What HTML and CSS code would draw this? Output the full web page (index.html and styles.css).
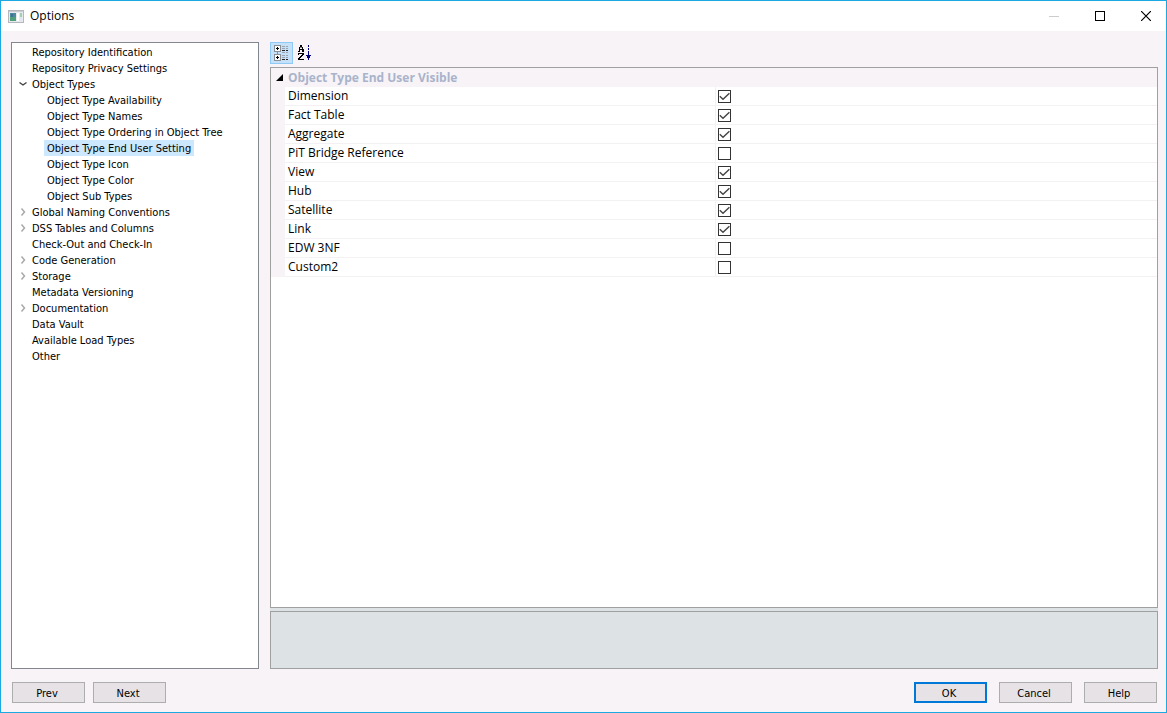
FILE: index.html
```html
<!DOCTYPE html>
<html lang="en">
<head>
    <meta charset="utf-8">
    <title>Options</title>
    <link rel="stylesheet" href="styles.css">
</head>
<body>
    <div class="window">
        <header class="titlebar">
            <svg class="app-icon" width="16" height="13" viewBox="0 0 16 13">
                <rect x="0.5" y="0.5" width="15" height="12" fill="#e8e9ec" stroke="#b4b7be"/>
                <rect x="1" y="1" width="14" height="1" fill="#c9ccd2"/>
                <rect x="2" y="3" width="6" height="8" fill="#4a8a9a"/>
                <rect x="2" y="7" width="6" height="4" fill="#4f9f7c"/>
                <rect x="3" y="4" width="2" height="3" fill="#3f6f9c"/>
                <rect x="9" y="3" width="2" height="8" fill="#fff"/>
                <rect x="12" y="3" width="2" height="4" fill="#9fd0b4"/>
                <rect x="12" y="7" width="2" height="4" fill="#dfe6ee"/>
            </svg>
            <h1>Options</h1>
            <div class="window-controls">
                <button type="button" aria-label="Minimize" disabled>
                    <svg width="10" height="10" viewBox="0 0 10 10"><rect y="5" width="10" height="1" fill="#ccc"/></svg>
                </button>
                <button type="button" aria-label="Maximize">
                    <svg width="10" height="10" viewBox="0 0 10 10"><rect x="0.5" y="0.5" width="9" height="9" fill="none" stroke="#000"/></svg>
                </button>
                <button type="button" aria-label="Close">
                    <svg width="10" height="10" viewBox="0 0 10 10"><path d="M0 0L10 10M10 0L0 10" stroke="#000" stroke-width="1.2"/></svg>
                </button>
            </div>
        </header>

        <main class="content">
            <nav class="tree" aria-label="Option categories">
                <ul>
                    <li><a href="#">Repository Identification</a></li>
                    <li><a href="#">Repository Privacy Settings</a></li>
                    <li>
                        <button type="button" class="toggle open" aria-label="Collapse Object Types"><svg width="8" height="8" viewBox="0 0 8 8"><path d="M0.5 2.5L4 5L7.5 2.5"/></svg></button><a href="#">Object Types</a>
                        <ul>
                            <li><a href="#">Object Type Availability</a></li>
                            <li><a href="#">Object Type Names</a></li>
                            <li><a href="#">Object Type Ordering in Object Tree</a></li>
                            <li><a href="#" class="selected">Object Type End User Setting</a></li>
                            <li><a href="#">Object Type Icon</a></li>
                            <li><a href="#">Object Type Color</a></li>
                            <li><a href="#">Object Sub Types</a></li>
                        </ul>
                    </li>
                    <li><button type="button" class="toggle" aria-label="Expand Global Naming Conventions"><svg width="8" height="8" viewBox="0 0 8 8"><path d="M2.5 0.5L5.5 4L2.5 7.5"/></svg></button><a href="#">Global Naming Conventions</a></li>
                    <li><button type="button" class="toggle" aria-label="Expand DSS Tables and Columns"><svg width="8" height="8" viewBox="0 0 8 8"><path d="M2.5 0.5L5.5 4L2.5 7.5"/></svg></button><a href="#">DSS Tables and Columns</a></li>
                    <li><a href="#">Check-Out and Check-In</a></li>
                    <li><button type="button" class="toggle" aria-label="Expand Code Generation"><svg width="8" height="8" viewBox="0 0 8 8"><path d="M2.5 0.5L5.5 4L2.5 7.5"/></svg></button><a href="#">Code Generation</a></li>
                    <li><button type="button" class="toggle" aria-label="Expand Storage"><svg width="8" height="8" viewBox="0 0 8 8"><path d="M2.5 0.5L5.5 4L2.5 7.5"/></svg></button><a href="#">Storage</a></li>
                    <li><a href="#">Metadata Versioning</a></li>
                    <li><button type="button" class="toggle" aria-label="Expand Documentation"><svg width="8" height="8" viewBox="0 0 8 8"><path d="M2.5 0.5L5.5 4L2.5 7.5"/></svg></button><a href="#">Documentation</a></li>
                    <li><a href="#">Data Vault</a></li>
                    <li><a href="#">Available Load Types</a></li>
                    <li><a href="#">Other</a></li>
                </ul>
            </nav>

            <section class="settings">
                <div class="toolbar">
                    <button type="button" class="active" aria-label="Categorized">
                        <svg width="15" height="16" viewBox="0 0 15 16">
                            <path d="M3.5 7V9" stroke="#8a8f96"/>
                            <rect x="0.5" y="0.5" width="6" height="6" fill="#fff" stroke="#8a8f96"/>
                            <rect x="0.5" y="9.5" width="6" height="6" fill="#fff" stroke="#8a8f96"/>
                            <path d="M2 3.5H5M3.5 2V5M2 12.5H5M3.5 11V14" stroke="#000"/>
                            <path d="M8 5.5H11M12 5.5H14M8 14.5H11M12 14.5H14" stroke="#222"/>
                            <path d="M8 1.5H11M12 1.5H14M8 3.5H11M12 3.5H14M8 7.5H11M12 7.5H14M8 10.5H11M12 10.5H14M8 12.5H11M12 12.5H14" stroke="#9aa3ad"/>
                        </svg>
                    </button>
                    <button type="button" aria-label="Alphabetical">
                        <svg width="14" height="16" viewBox="0 0 14 16">
                            <path d="M2 0H4V2H5V4H6V7H4V5H2V7H0V6H1V4H1V2H2ZM2 3V4H4V3L3 2Z" fill="#000" fill-rule="evenodd"/>
                            <path d="M0 8H6V10H5V11H4V12H3V13H2V14H6V15H0V13H1V12H2V11H3V10H4V9H1V10H0Z" fill="#000"/>
                            <path d="M10 0H11V2H10ZM10 3H11V5H10ZM10 6H11V10H13V11H12V12H12V13H11V15H10V13H9V12H9V11H8V10H10Z" fill="#000080"/>
                        </svg>
                    </button>
                </div>
                <div class="property-grid">
                    <table>
                        <colgroup>
                            <col class="col-margin">
                            <col>
                            <col class="col-value">
                        </colgroup>
                        <thead>
                            <tr>
                                <th class="margin"><svg width="7" height="7" viewBox="0 0 7 7"><path d="M7 0V7H0Z"/></svg></th>
                                <th colspan="2">Object Type End User Visible</th>
                            </tr>
                        </thead>
                        <tbody>
                            <tr><td class="margin"></td><td class="name"><label for="dimension">Dimension</label></td><td><input type="checkbox" id="dimension" checked></td></tr>
                            <tr><td class="margin"></td><td class="name"><label for="fact-table">Fact Table</label></td><td><input type="checkbox" id="fact-table" checked></td></tr>
                            <tr><td class="margin"></td><td class="name"><label for="aggregate">Aggregate</label></td><td><input type="checkbox" id="aggregate" checked></td></tr>
                            <tr><td class="margin"></td><td class="name"><label for="pit-bridge">PiT Bridge Reference</label></td><td><input type="checkbox" id="pit-bridge"></td></tr>
                            <tr><td class="margin"></td><td class="name"><label for="view">View</label></td><td><input type="checkbox" id="view" checked></td></tr>
                            <tr><td class="margin"></td><td class="name"><label for="hub">Hub</label></td><td><input type="checkbox" id="hub" checked></td></tr>
                            <tr><td class="margin"></td><td class="name"><label for="satellite">Satellite</label></td><td><input type="checkbox" id="satellite" checked></td></tr>
                            <tr><td class="margin"></td><td class="name"><label for="link">Link</label></td><td><input type="checkbox" id="link" checked></td></tr>
                            <tr><td class="margin"></td><td class="name"><label for="edw-3nf">EDW 3NF</label></td><td><input type="checkbox" id="edw-3nf"></td></tr>
                            <tr><td class="margin"></td><td class="name"><label for="custom2">Custom2</label></td><td><input type="checkbox" id="custom2"></td></tr>
                        </tbody>
                    </table>
                </div>
                <div class="splitter"></div>
                <div class="description"></div>
            </section>
        </main>

        <footer class="buttons">
            <button type="button">Prev</button>
            <button type="button">Next</button>
            <span class="spacer"></span>
            <div class="dialog-buttons">
                <button type="button" class="default">OK</button>
                <button type="button">Cancel</button>
                <button type="button">Help</button>
            </div>
        </footer>
    </div>
</body>
</html>
```

FILE: styles.css
```css
* {
    box-sizing: border-box;
}
body {
    margin: 0;
    font-family: "DejaVu Sans Condensed", "Noto Sans", sans-serif;
    font-size: 11px;
    color: #000;
}
button {
    font: inherit;
    color: inherit;
    padding: 0;
}
svg {
    display: block;
}
.window {
    display: flex;
    flex-direction: column;
    min-height: 100vh;
    border: 1px solid #1ca8e0;
    background-color: #f7f3f7;
}

/* title bar */
.titlebar {
    display: flex;
    align-items: center;
    height: 30px;
    padding-left: 7px;
    background-color: #fff;
}
.titlebar h1 {
    flex: 1;
    margin: 0 0 0 6px;
    font-family: "Open Sans", sans-serif;
    font-size: 12px;
    font-weight: normal;
    line-height: 16px;
}
.window-controls {
    display: flex;
    gap: 6px;
}
.window-controls button {
    display: flex;
    align-items: center;
    justify-content: center;
    width: 40px;
    height: 28px;
    border: 0;
    background: none;
}

/* main area */
.content {
    flex: 1;
    display: flex;
    gap: 11px;
    padding: 11px 8px 0 10px;
}
.tree {
    flex: none;
    width: 248px;
    padding-top: 1px;
    border: 1px solid #828790;
    background-color: #fff;
}
.tree ul {
    margin: 0;
    padding: 0 0 0 17px;
    list-style: none;
}
.tree ul ul {
    padding-left: 15px;
}
.tree li {
    line-height: 16px;
}
.tree a {
    display: inline-block;
    vertical-align: top;
    padding: 2px 3px 0;
    line-height: 14px;
    color: #000;
    text-decoration: none;
}
.tree a.selected {
    background-color: #cce8ff;
}
.toggle {
    display: inline-flex;
    align-items: center;
    justify-content: center;
    vertical-align: top;
    width: 12px;
    height: 16px;
    margin-left: -12px;
    border: 0;
    background: none;
}
.toggle path {
    fill: none;
    stroke: #a6a6a6;
    stroke-width: 1.4;
}
.toggle.open path {
    stroke: #404040;
}

/* property grid */
.settings {
    flex: 1;
    display: flex;
    flex-direction: column;
}
.toolbar {
    display: flex;
    margin-bottom: 3px;
}
.toolbar button {
    display: flex;
    align-items: center;
    justify-content: center;
    width: 23px;
    height: 22px;
    border: 1px solid transparent;
    background: none;
}
.toolbar button.active {
    border-color: #90c8f6;
    background-color: #c4e1f9;
}
.property-grid {
    flex: 1;
    border: 1px solid #a0a0a0;
    background-color: #fff;
    font-family: "Open Sans", sans-serif;
    font-size: 12px;
}
.property-grid table {
    width: 100%;
    table-layout: fixed;
    border-collapse: separate;
    border-spacing: 0;
}
.col-margin {
    width: 14px;
}
.col-value {
    width: 49.8%;
}
.property-grid th,
.property-grid td {
    height: 19px;
    padding: 0 2px;
    line-height: 18px;
    text-align: left;
}
.property-grid th {
    background-color: #f7f3f7;
    color: #a9b3cb;
}
.property-grid td {
    border-bottom: 1px solid #f4f1f4;
}
.property-grid .name {
    padding-left: 3px;
    border-right: 1px solid #f4f1f4;
}
.property-grid th[colspan] {
    padding-left: 3px;
}
.property-grid .margin {
    padding-left: 5px;
    background-color: #f7f3f7;
    border-bottom-color: #f7f3f7;
}
.property-grid label {
    display: block;
}
.property-grid input {
    display: block;
    appearance: none;
    width: 13px;
    height: 13px;
    margin: 0;
    border: 1px solid #333;
    background-color: #fff;
}
.property-grid input:checked {
    background-image: url("data:image/svg+xml,%3Csvg xmlns='http://www.w3.org/2000/svg' viewBox='0 0 11 11'%3E%3Cpath d='M0.8 5.2L4 8.2L10.4 2.2' fill='none' stroke='%23444' stroke-width='1.4'/%3E%3C/svg%3E");
}
.splitter {
    height: 3px;
    background-color: #dde2e5;
}
.description {
    height: 58px;
    border: 1px solid #a0a0a0;
    background-color: #dde2e5;
}

/* bottom buttons */
.buttons {
    display: flex;
    gap: 8px;
    padding: 13px 9px 9px 11px;
}
.buttons button {
    width: 73px;
    height: 21px;
    padding: 1px 3px 0 0;
    border: 1px solid #adadad;
    background-color: #e6e2e6;
}
.buttons button.default {
    border: 2px solid #0078d7;
}
.spacer {
    flex: 1;
}
.dialog-buttons {
    display: flex;
    gap: 12px;
}
```
